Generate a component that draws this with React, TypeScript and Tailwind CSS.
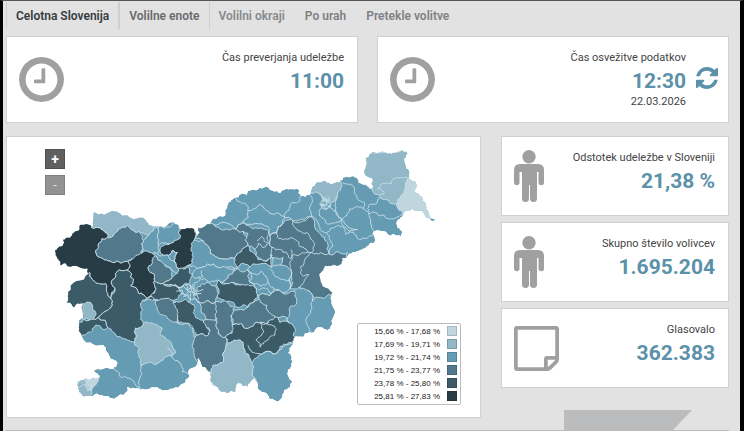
import React from 'react';

type Point = [number, number];

interface Region {
  fill: string;
  points: string;
}

const LEVELS = ['#bfd6df', '#92b7c7', '#659cb3', '#51798b', '#3c5b69', '#283c46'];

const LEGEND = [
  '15,66 % - 17,68 %',
  '17,69 % - 19,71 %',
  '19,72 % - 21,74 %',
  '21,75 % - 23,77 %',
  '23,78 % - 25,80 %',
  '25,81 % - 27,83 %'
];

const OUTLINE =
  '54,250 62,245 62,239 70,236 78,230 79,225 88,224 92,226 93,212 103,214 118,212 130,217 140,217 148,225 158,226 178,224 180,229 193,228 197,237 198,227 210,223 213,218 225,215 227,205 235,197 247,195 248,190 260,187 273,190 287,188 299,189 301,195 310,194 313,186 327,182 343,179 343,177 357,177 373,188 372,177 365,172 366,157 378,152 392,153 400,150 408,152 405,160 407,168 410,178 417,183 415,190 427,203 430,213 437,219 427,217 413,208 405,212 398,220 398,227 403,232 402,236 390,235 373,233 376,240 365,248 353,252 342,257 342,263 335,264 325,265 320,273 325,287 333,292 332,300 332,320 328,330 318,327 310,332 303,337 295,337 293,345 288,353 293,362 288,370 293,382 284,390 279,401 270,399 262,392 255,378 248,387 238,382 235,392 227,393 210,380 210,372 202,367 199,358 197,359 188,372 188,378 180,385 167,390 157,387 140,390 127,387 123,395 113,399 100,395 90,396 78,392 77,383 87,379 99,377 93,371 113,369 117,363 108,355 103,345 80,333 78,330 78,322 83,318 82,312 82,303 73,307 66,302 67,292 88,273 87,268 65,263 60,265 58,260';

const REGIONS: Region[] = [
  // west
  { fill: LEVELS[4], points: '60,290 88,268 90,277 98,283 105,283 106,290 110,298 113,293 112,305 103,312 98,317 92,319 83,319 60,310' },
  { fill: LEVELS[5], points: '40,250 70,215 92,222 91,227 95,227 103,230 107,237 98,243 95,250 100,257 112,262 128,260 127,270 115,273 114,287 110,298 106,290 105,283 98,283 90,277 89,272 80,275 40,275' },
  { fill: LEVELS[1], points: '91,227 90,205 120,205 150,215 158,226 153,228 148,235 140,232 127,225 118,228 107,237 103,230 95,227' },
  { fill: LEVELS[3], points: '107,237 118,228 127,225 140,232 143,240 142,247 140,255 128,260 112,262 100,257 95,250 98,243' },
  { fill: LEVELS[2], points: '143,240 148,235 153,228 158,226 157,237 158,245 157,253 142,253 142,247' },
  { fill: LEVELS[2], points: '158,226 178,218 180,229 180,237 170,243 158,245 157,237' },
  { fill: LEVELS[5], points: '180,229 180,220 194,222 194,240 193,257 188,265 178,268 175,262 177,252 172,250 168,255 160,253 160,247 170,243 180,237' },
  { fill: LEVELS[2], points: '142,253 157,253 168,255 172,250 177,252 175,262 178,268 177,273 170,267 163,263 155,255' },
  { fill: LEVELS[2], points: '168,255 172,250 177,252 175,262 171,260' },
  { fill: LEVELS[3], points: '155,255 163,263 172,270 172,277 163,283 153,282 152,273 148,270 152,262' },
  { fill: LEVELS[5], points: '128,260 140,253 155,255 152,262 148,270 152,273 153,282 155,290 153,293 147,298 138,293 130,285 133,280 130,272 127,270' },
  { fill: LEVELS[4], points: '115,273 127,270 130,272 133,280 130,285 138,293 147,298 142,300 142,310 140,318 143,323 135,328 134,342 127,340 113,332 107,327 98,317 103,312 112,305 113,293 114,287' },
  { fill: LEVELS[1], points: '80,303 88,302 92,305 95,315 92,319 82,319' },
  { fill: LEVELS[4], points: '72,322 83,319 92,319 98,317 107,327 105,329 95,325 90,332 76,332' },
  { fill: LEVELS[1], points: '143,323 152,323 162,328 160,335 168,340 173,348 175,353 168,355 163,360 147,363 141,366 137,352 138,347 134,342 135,328' },
  { fill: LEVELS[1], points: '72,382 87,379 92,385 90,400 74,396' },
  { fill: LEVELS[0], points: '85,379 92,378 99,376 96,383 92,387 90,391 87,386' },
  // around Ljubljana
  { fill: LEVELS[4], points: '147,298 155,290 153,282 163,283 172,285 182,293 178,298 173,300 158,300' },
  { fill: LEVELS[3], points: '155,300 170,299 178,303 177,322 170,320 163,315 157,310' },
  { fill: LEVELS[4], points: '178,268 188,266 192,275 190,282 180,287 170,284 163,283 172,277 177,273' },
  { fill: LEVELS[4], points: '173,302 185,299 195,308 195,317 203,320 210,330 208,335 195,337 188,323 177,323 178,312' },
  { fill: LEVELS[3], points: '197,287 208,282 215,285 217,297 215,302 198,302 193,295' },
  { fill: LEVELS[3], points: '198,302 215,302 217,308 215,320 205,322 202,313' },
  { fill: LEVELS[3], points: '195,337 208,335 210,330 203,322 217,322 218,333 227,340 225,350 222,363 213,365 210,374 200,370 196,360 193,348' },
  { fill: LEVELS[1], points: '222,363 225,350 228,343 238,340 243,342 245,352 252,363 255,378 250,395 225,400 205,380 213,365' },
  { fill: LEVELS[3], points: '198,220 213,223 225,229 235,228 243,229 248,245 242,250 235,260 237,258 220,258 210,253 203,240 195,238' },
  { fill: LEVELS[2], points: '194,239 203,240 210,253 220,258 237,258 238,268 218,267 197,268 188,265 193,257' },
  { fill: LEVELS[2], points: '197,268 218,267 235,268 228,275 223,282 208,282 200,278 192,275' },
  // south-east
  { fill: LEVELS[4], points: '225,337 232,333 232,325 248,328 260,322 268,323 273,315 290,323 295,340 287,344 277,353 262,354 252,363 245,352 243,342 238,340 228,343' },
  { fill: LEVELS[4], points: '260,323 275,326 275,335 267,340 260,347 256,340 263,333' },
  { fill: LEVELS[3], points: '233,310 248,307 257,300 267,302 270,312 275,317 268,323 260,322 248,328 232,325' },
  { fill: LEVELS[3], points: '215,302 227,301 235,307 233,312 232,325 230,333 225,337 218,333 217,322 215,315' },
  { fill: LEVELS[4], points: '218,280 232,282 248,282 257,290 258,297 248,306 238,307 227,301 217,297' },
  { fill: LEVELS[3], points: '258,295 270,295 280,290 295,290 297,302 290,312 289,323 273,315 267,305' },
  // centre and north-east
  { fill: LEVELS[3], points: '223,282 228,275 237,268 248,270 250,282 257,288 248,284 232,282' },
  { fill: LEVELS[3], points: '270,235 277,232 283,223 293,220 312,216 315,223 320,233 328,242 329,253 348,252 348,263 330,270 328,285 340,292 318,297 313,300 308,290 290,288 291,272 283,270 283,258 272,257 272,247' },
  { fill: LEVELS[3], points: '235,228 243,222 258,228 268,230 270,235 272,247 271,257 263,260 255,250 248,245 248,233 240,232' },
  { fill: LEVELS[4], points: '248,245 255,253 258,259 268,260 272,255 272,267 263,267 253,268 237,267 235,260 242,250' },
  { fill: LEVELS[2], points: '273,257 283,257 281,267 275,267' },
  { fill: LEVELS[2], points: '248,268 272,267 291,270 290,288 273,287 270,295 258,295 257,288 250,282' },
  { fill: LEVELS[1], points: '308,192 308,180 343,172 342,183 338,195 332,202 323,198 320,193' },
  { fill: LEVELS[1], points: '373,188 360,172 362,145 410,145 412,178 405,190 398,203 389,199 380,195' },
  { fill: LEVELS[0], points: '410,177 425,180 445,222 425,220 403,212 397,204 405,190' }
];

const BORDERS = [
  '235,197 247,205 248,210 243,222 235,228 213,224',
  '248,210 260,204 270,213 285,217 292,202 300,200 301,192',
  '243,222 268,226 270,235 277,232 283,223 285,217 312,215 313,200 309,192',
  '343,182 355,190 358,198 365,202 363,208 369,212 368,208 377,203 380,196',
  '369,213 385,215 392,218 405,211',
  '369,213 372,227 374,235 360,239 357,235 343,225 342,219 350,208 363,207',
  '338,195 336,203 342,218 330,205 322,203 319,212 326,222 336,222 342,219',
  '312,215 318,222 327,232 335,227 343,226',
  '327,232 331,240 329,253',
  '343,226 346,234 358,229 342,219',
  '380,195 385,192 378,188 382,183 392,183 397,177 403,177 410,178',
  '320,193 323,199 321,205 326,209 332,204',
  '277,232 279,238 295,239 300,246 312,252 313,240 307,232 296,228 293,220',
  '272,247 281,249 290,258 300,254 312,252 330,253',
  '310,253 301,266 304,276 309,274 304,282 301,289',
  '291,249 290,262 292,272 290,288',
  '257,240 262,236 268,242 268,233',
  '255,250 258,243 263,247 270,242',
  '248,270 262,271 268,281 273,287',
  '250,282 260,286 268,281',
  '270,268 275,276 283,279 290,280',
  '258,290 268,289 272,293',
  '308,290 313,300 312,308 307,318 308,326 313,334',
  '113,369 120,377 127,378 142,390',
  '140,364 140,376 142,392',
  '167,348 172,353 180,363 182,372 190,374',
  '142,300 150,296 155,301',
  '177,322 188,323 194,337',
  '170,284 180,287 185,283 192,287 200,279',
  '248,345 252,352 262,354 277,353 295,341',
  '201,270 203,276 198,277',
  '91,385 87,391 84,384',
  '77,388 84,384 88,390'
];

// dense little districts inside the two largest cities
const CITY_BORDERS = [
  '178,288 183,286 187,290 193,288 198,291 203,289',
  '180,293 186,294 190,291 195,295 201,293',
  '183,297 188,294 190,299 195,298 199,302',
  '186,284 187,290 190,296 188,302',
  '190,284 191,290 195,295',
  '195,284 193,289 197,293 198,299',
  '176,291 182,290 185,296',
  '322,200 327,201 326,206 321,204 324,198 329,199',
  '325,199 331,203 328,208 322,207 326,203',
  '327,195 330,198 327,202 324,196'
];

const parse = (points: string): Point[] =>
  points.split(' ').map((pair) => pair.split(',').map(Number) as Point);

// Midpoint displacement; an edge gives the same line from either end, so neighbours share it
const roughen = (a: Point, b: Point, depth: number): Point[] => {
  const dx = b[0] - a[0];
  const dy = b[1] - a[1];
  if (depth === 0 || Math.hypot(dx, dy) < 2) return [b];
  const forward = a[0] < b[0] || (a[0] === b[0] && a[1] < b[1]);
  const seed = Math.sin((a[0] + b[0]) * 12.9 + (a[1] + b[1]) * 78.2) * 43758;
  const shift = (seed - Math.floor(seed) - 0.5) * 0.46 * (forward ? 1 : -1);
  const mid: Point = [(a[0] + b[0]) / 2 - dy * shift, (a[1] + b[1]) / 2 + dx * shift];
  return [...roughen(a, mid, depth - 1), ...roughen(mid, b, depth - 1)];
};

const toPath = (source: string, closed: boolean) => {
  const points = parse(source);
  const ring = closed ? [...points, points[0]] : points;
  const line = ring.slice(1).flatMap((point, index) => roughen(ring[index], point, 3));
  return `M${ring[0].join(',')}L${line.map(([x, y]) => `${x.toFixed(1)},${y.toFixed(1)}`).join(' ')}${closed ? 'Z' : ''}`;
};

const TurnoutMap: React.FC = () => (
  <svg viewBox="6 136 475 281" className="block w-full" role="img" aria-label="Slovenija">
    <clipPath id="country">
      <path d={toPath(OUTLINE, true)} />
    </clipPath>
    <g clipPath="url(#country)" stroke="#c9e0e9" strokeWidth="0.9" strokeLinejoin="round">
      <path d={toPath(OUTLINE, true)} fill={LEVELS[2]} stroke="none" />
      {REGIONS.map((region, index) => (
        <path key={index} d={toPath(region.points, true)} fill={region.fill} />
      ))}
      {BORDERS.map((border) => (
        <path key={border} d={toPath(border, false)} fill="none" />
      ))}
      {CITY_BORDERS.map((border) => (
        <path key={border} d={toPath(border, false)} fill="none" strokeWidth="1" />
      ))}
    </g>
  </svg>
);

const ClockIcon = () => (
  <svg viewBox="128 128 1536 1536" className="size-[45px] shrink-0 fill-[#a0a0a0]" aria-hidden="true">
    <path d="M1024 544v448q0 14-9 23t-23 9h-320q-14 0-23-9t-9-23v-64q0-14 9-23t23-9h224v-352q0-14 9-23t23-9h64q14 0 23 9t9 23zm416 352q0-148-73-273t-198-198-273-73-273 73-198 198-73 273 73 273 198 198 273 73 273-73 198-198 73-273zm224 0q0 209-103 385.500t-279.500 279.500-385.500 103-385.500-103-279.500-279.500-103-385.500 103-385.500 279.500-279.500 385.500-103 385.500 103 279.500 279.500 103 385.500z" />
  </svg>
);

const RefreshIcon = () => (
  <svg viewBox="0 0 1536 1536" className="size-[22px] fill-[#5b91a9]" aria-hidden="true">
    <path d="M1511 928q0 5-1 7-64 268-268 434.500t-478 166.500q-146 0-282.500-55t-243.500-157l-129 129q-19 19-45 19t-45-19-19-45v-448q0-26 19-45t45-19h448q26 0 45 19t19 45-19 45l-137 137q71 66 161 102t187 36q134 0 250-65t186-179q11-17 53-117 8-23 30-23h192q13 0 22.500 9.500t9.500 22.500zm25-800v448q0 26-19 45t-45 19h-448q-26 0-45-19t-19-45 19-45l138-138q-148-137-349-137-134 0-250 65t-186 179q-11 17-53 117-8 23-30 23h-199q-13 0-22.500-9.500t-9.500-22.500v-7q65-268 270-434.500t480-166.500q146 0 284 55.500t245 156.500l130-129q19-19 45-19t45 19 19 45z" />
  </svg>
);

const PersonIcon = () => (
  <svg viewBox="0 0 30 52" className="h-[52px] w-[30px] shrink-0 fill-[#a0a0a0]" aria-hidden="true">
    <circle cx="15" cy="6.700" r="6.700" />
    <path d="M6 14h18q6 0 6 6v12.500a2.500 2.500 0 0 1-5.500 0V22h-1.500v26.500a3 3 0 0 1-7 0V35h-1v13.500a3 3 0 0 1-7 0V22H5.500v10.500a2.500 2.500 0 0 1-5.500 0V20q0-6 6-6z" />
  </svg>
);

const NoteIcon = () => (
  <svg viewBox="128 128 1536 1536" className="size-[45px] shrink-0 fill-[#a0a0a0]" aria-hidden="true">
    <path d="M1528 1280h-248v248q29-10 41-22l185-185q12-12 22-41zm-280-128h288v-896h-1280v1280h896v-288q0-40 28-68t68-28zm416-928v1024q0 40-20 88t-48 76l-184 184q-28 28-76 48t-88 20h-1024q-40 0-68-28t-28-68v-1344q0-40 28-68t68-28h1344q40 0 68 28t28 68z" />
  </svg>
);

interface StatCardProps {
  icon: React.ReactNode;
  label: string;
  value: string;
  note?: string;
  action?: React.ReactNode;
  className?: string;
}

const StatCard: React.FC<StatCardProps> = ({ icon, label, value, note, action, className = '' }) => (
  <section className={`flex justify-between border border-[#d0d0d0] bg-white pl-3 ${className}`}>
    <div className="flex items-center">{icon}</div>
    <div className="flex items-start">
      <div className="pt-[13px] text-right">
        <h2 className="text-[11px] leading-4 text-[#444]">{label}</h2>
        <p className="text-[21px] leading-[30px] font-bold text-[#5b91a9]">{value}</p>
        {note && <p className="text-[11px] leading-3 text-[#444]">{note}</p>}
      </div>
      {action}
    </div>
  </section>
);

const TABS = [
  { label: 'Celotna Slovenija', className: 'px-[9px] border-l border-l-[#cfcfcf] border-r-2 border-r-[#cfcfcf] text-[#333a3e]' },
  { label: 'Volilne enote', className: 'px-[9px] border-r border-r-[#cfcfcf] text-[#666b6e]' },
  { label: 'Volilni okraji', className: 'pr-[11px] pl-[9px] text-[#85898c]' },
  { label: 'Po urah', className: 'pr-[11px] pl-[9px] text-[#7d8184]' },
  { label: 'Pretekle volitve', className: 'pl-[9px] text-[#7d8184]' }
];

export default function App() {
  return (
    <div className="min-h-screen overflow-hidden border-t border-l-3 border-r-4 border-t-[#555] border-r-black border-l-black bg-[#e2e2e2] pr-[11px] pl-[3px] font-[Roboto,sans-serif]">
      <nav className="mt-px flex h-[27px]">
        {TABS.map((tab) => (
          <button key={tab.label} type="button" className={`pt-px text-xs font-semibold whitespace-nowrap ${tab.className}`}>
            {tab.label}
          </button>
        ))}
      </nav>

      <div className="mt-[7px] grid grid-cols-2 gap-[19px]">
        <StatCard className="h-[87px] pr-[13px]" icon={<ClockIcon />} label="Čas preverjanja udeležbe" value="11:00" />
        <StatCard
          className="h-[87px] pr-[10px]"
          icon={<ClockIcon />}
          label="Čas osvežitve podatkov"
          value="12:30"
          note="22.03.2026"
          action={
            <button type="button" aria-label="Osveži" className="mt-[30px] ml-[10px]">
              <RefreshIcon />
            </button>
          }
        />
      </div>

      <div className="mt-[13px] grid grid-cols-[475fr_228fr] items-start gap-5">
        <main className="relative border border-[#d0d0d0] bg-white">
          <TurnoutMap />
          <div className="absolute top-3 left-[38px] flex flex-col gap-[6px]">
            <button type="button" aria-label="Povečaj" className="flex size-5 items-center justify-center border border-[#505050] bg-[#606060] text-sm leading-none font-bold text-white">
              +
            </button>
            <button type="button" aria-label="Pomanjšaj" className="flex size-5 items-center justify-center border border-[#808080] bg-[#929292] text-sm leading-none text-[#ddd]">
              -
            </button>
          </div>
          <ul className="absolute right-[19px] bottom-3 w-[104px] rounded-xs border border-[#bbb] bg-white py-px pr-[3px] font-['Liberation_Sans',Arial,sans-serif] text-[8px] leading-[13px] text-[#222]">
            {LEGEND.map((range, index) => (
              <li key={range} className="flex items-center justify-end gap-[7px]">
                <span>{range}</span>
                <span className="size-[10px] border border-black/15" style={{ backgroundColor: LEVELS[index] }}></span>
              </li>
            ))}
          </ul>
        </main>

        <aside className="flex flex-col gap-[6px]">
          <StatCard className="h-20 pr-[13px]" icon={<PersonIcon />} label="Odstotek udeležbe v Sloveniji" value="21,38 %" />
          <StatCard className="h-20 pr-[13px]" icon={<PersonIcon />} label="Skupno število volivcev" value="1.695.204" />
          <StatCard className="h-20 pr-[13px]" icon={<NoteIcon />} label="Glasovalo" value="362.383" />
        </aside>
      </div>

      <footer className="-mt-2 flex justify-end border-b border-[#bbb] pr-[37px]">
        <svg viewBox="0 0 128 20" className="h-5 w-32 fill-[#bbbcbe]" aria-hidden="true">
          <path d="M0 0h128l-19 20H0z" />
        </svg>
      </footer>
    </div>
  );
}
